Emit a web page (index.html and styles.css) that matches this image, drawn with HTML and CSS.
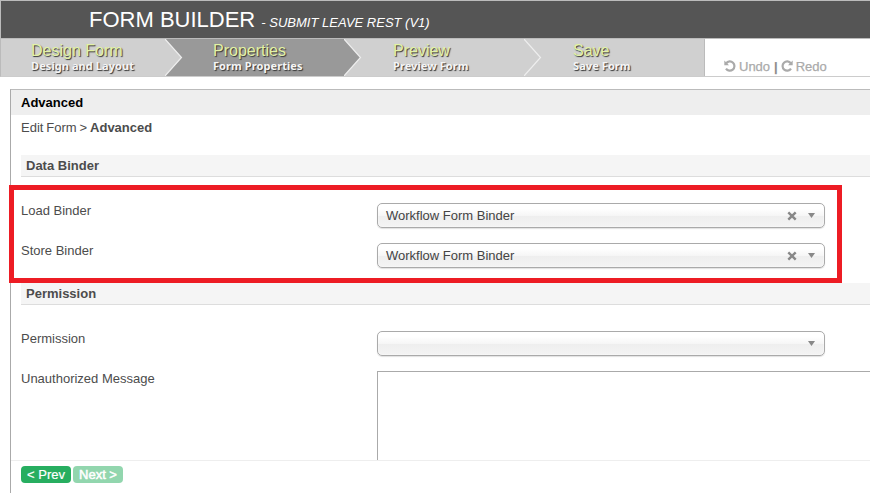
FILE: index.html
```html
<!DOCTYPE html>
<html lang="en">
<head>
<meta charset="utf-8">
<title>Form Builder</title>
<link rel="stylesheet" href="styles.css">
</head>
<body>
<header class="topbar"><h1>FORM BUILDER <i>- SUBMIT LEAVE REST (V1)</i></h1></header>
<nav class="nav">
  <ol class="steps">
    <li class="step"><b>Design Form</b><span>Design and Layout</span>
      <svg class="arrow" width="18" height="37" viewBox="0 0 18 37"><path class="fill-dark" d="M0 0H18V37H0Z"/><path class="fill-light" d="M0 0L16.5 18.5L0 37Z"/><path class="edge" d="M0 0L16.5 18.5L0 37"/></svg></li>
    <li class="step active"><b>Properties</b><span>Form Properties</span>
      <svg class="arrow" width="18" height="37" viewBox="0 0 18 37"><path class="fill-light" d="M0 0H18V37H0Z"/><path class="fill-dark" d="M0 0L16.5 18.5L0 37Z"/><path class="edge" d="M0 0L16.5 18.5L0 37"/></svg></li>
    <li class="step"><b>Preview</b><span>Preview Form</span>
      <svg class="arrow" width="18" height="37" viewBox="0 0 18 37"><path class="edge" d="M0 0L16.5 18.5L0 37"/></svg></li>
    <li class="step"><b>Save</b><span>Save Form</span></li>
  </ol>
  <div class="history">
    <svg width="12" height="12" viewBox="0 0 12 12"><path class="curve" d="M2.2 3.2A4.6 4.6 0 1 1 2 8.6"/><path class="head" d="M0.3 0.6V5.3H5Z"/></svg>
    <span>Undo</span><b>|</b>
    <svg width="12" height="12" viewBox="0 0 12 12"><path class="curve" d="M9.8 3.2A4.6 4.6 0 1 0 10 8.6"/><path class="head" d="M11.7 0.6V5.3H7Z"/></svg>
    <span>Redo</span>
  </div>
</nav>
<main class="panel">
  <h2>Advanced</h2>
  <div class="content">
    <p class="crumbs">Edit Form &gt; <b>Advanced</b></p>
    <section>
      <h3>Data Binder</h3>
      <div class="row"><label>Load Binder</label>
        <div class="select"><span>Workflow Form Binder</span><svg class="clear" width="10" height="10" viewBox="0 0 10 10"><path d="M1.3 1.3L8.7 8.7M8.7 1.3L1.3 8.7"/></svg><i class="caret"></i></div></div>
      <div class="row"><label>Store Binder</label>
        <div class="select"><span>Workflow Form Binder</span><svg class="clear" width="10" height="10" viewBox="0 0 10 10"><path d="M1.3 1.3L8.7 8.7M8.7 1.3L1.3 8.7"/></svg><i class="caret"></i></div></div>
      <div class="highlight"></div>
    </section>
    <section>
      <h3>Permission</h3>
      <div class="row"><label>Permission</label><div class="select"><span></span><i class="caret"></i></div></div>
      <div class="row"><label>Unauthorized Message</label><div class="textarea"></div></div>
    </section>
  </div>
  <footer><span class="btn">&lt; Prev</span><span class="btn disabled">Next &gt;</span></footer>
</main>
</body>
</html>
```

FILE: styles.css
```css
* { box-sizing: border-box; }
body { margin: 0; width: 870px; height: 493px; overflow: hidden; background: #fff; color: #4c4c4c; font: 13px/15px "Liberation Sans", Arial, sans-serif; display: flex; flex-direction: column; }
h1, h2, h3, p, ol { margin: 0; padding: 0; }
.topbar { flex: none; height: 38px; background: #555; border-top: 1px solid #bbb; border-left: 1px solid #bbb; padding: 6px 0 0 88px; color: #fff; }
h1 { font-size: 22px; line-height: 25px; font-weight: normal; white-space: pre; }
h1 i { font-size: 13px; }
.nav { flex: none; height: 39px; display: flex; border: solid #bbb; border-width: 1px 0 1px 1px; border-bottom-color: #ccc; }
.steps { width: 704px; display: flex; list-style: none; background: #d0d0d0; border-right: 1px solid #bbb; }
.step { position: relative; width: 180px; padding: 3px 0 0 49px; color: #f5f5f5; text-shadow: 1px 1px 1px #333; }
.step:first-child { z-index: 1; width: 164px; padding-left: 30px; }
.step:nth-child(2) { width: 179px; padding-left: 48px; }
.step b { display: block; font-size: 16px; line-height: 17px; font-weight: normal; color: #e3f2a5; }
.step span { display: block; font: bold 11px/13px "Noto Sans", sans-serif; letter-spacing: .08px; white-space: nowrap; }
.active { background: #999; }
.arrow { position: absolute; left: 100%; top: 0; }
.fill-dark { fill: #999; }
.fill-light { fill: #d0d0d0; }
.edge { fill: none; stroke: #eee; stroke-width: 1.2; }
.history { display: flex; align-items: center; padding: 17px 0 0 19px; color: #aaa; -webkit-text-stroke: .25px #aaa; }
.history b { margin: 0 3px 0 4px; color: #888; }
.history svg { margin-right: 3px; }
.curve { fill: none; stroke: #aaa; stroke-width: 2.2; }
.head { fill: #aaa; }
.panel { flex: none; margin: 12px 0 0 10px; height: 404px; border-top: 1px solid #bbb; border-left: 1px solid #aaa; display: flex; flex-direction: column; }
h2 { flex: none; height: 25px; padding: 5px 10px; background: #eee; color: #000; font-size: 13px; line-height: 15px; }
.content { flex: none; height: 345px; clip-path: inset(0 0 0 -5px); padding: 5px 0 0 10px; }
.crumbs { height: 35px; word-spacing: -.7px; }
section { position: relative; height: 128px; }
h3 { height: 22px; margin-bottom: 26px; padding: 3px 5px; background: #f5f5f5; border-bottom: 1px solid #ddd; font-size: 13px; line-height: 15px; }
.row { display: flex; height: 40px; }
label { width: 356px; flex: none; }
.select { flex: none; width: 448px; height: 25px; display: flex; align-items: center; padding: 0 9px 0 8px; border: 1px solid #aaa; border-radius: 5px; background: linear-gradient(#fff 20%, #f6f6f6 50%, #eee 52%, #f4f4f4); box-shadow: inset 0 0 2px #fff, 0 1px 1px rgba(0,0,0,.12); color: #444; }
.select span { flex: 1; }
.clear { margin-right: 11px; }
.clear path { stroke: #888; stroke-width: 2.4; }
.caret { width: 7px; height: 5px; background: #888; clip-path: polygon(0 0, 100% 0, 50% 100%); }
.highlight { position: absolute; left: -12px; top: 30px; width: 833px; height: 98px; border: 5px solid #ed1c24; z-index: 1; }
.textarea { flex: none; width: 510px; height: 120px; border: 1px solid #aaa; background: #fff; }
footer { flex: 1; border-top: 1px solid #eee; padding: 5px 10px; display: flex; gap: 2px; }
.btn { width: 50px; height: 17px; border-radius: 4px; background: #27ae60; color: #fff; text-align: center; line-height: 17px; -webkit-text-stroke: .2px #fff; }
.disabled { opacity: .5; -webkit-text-stroke: .5px #fff; }
```
